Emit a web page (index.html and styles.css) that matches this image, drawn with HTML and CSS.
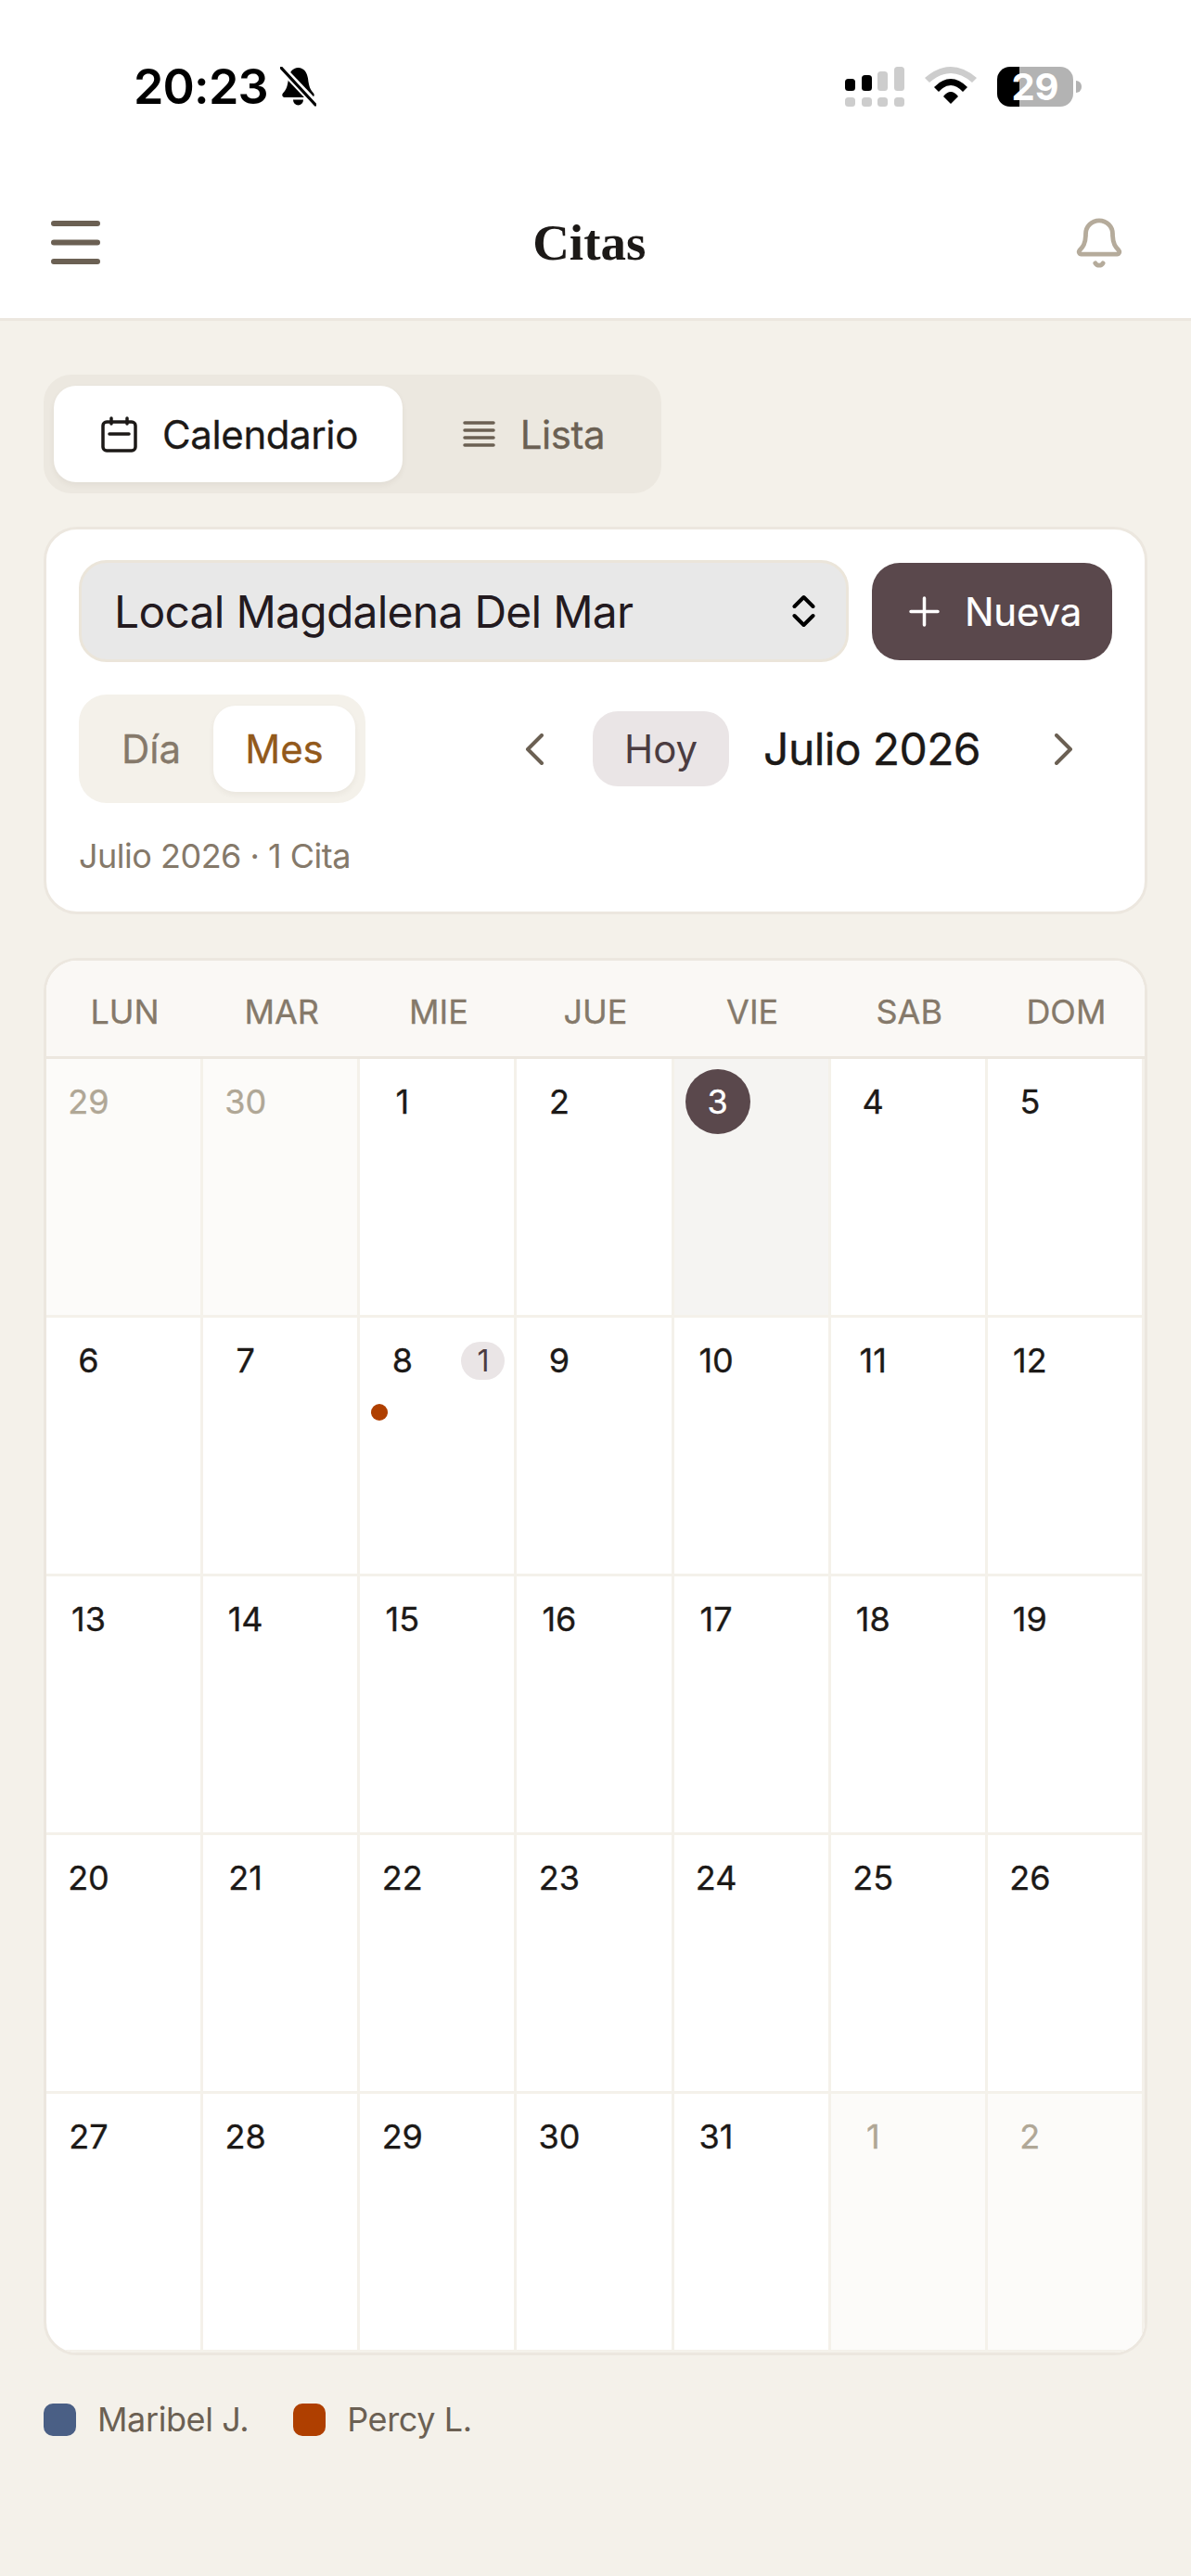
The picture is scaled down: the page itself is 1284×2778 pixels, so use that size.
FILE: index.html
```html
<!DOCTYPE html>
<html lang="es">
<head>
<meta charset="utf-8">
<title>Citas</title>
<link rel="stylesheet" href="styles.css">
</head>
<body>
<header class="top">
  <div class="status">
    <div class="status-left">
      <span class="time">20:23</span>
      <svg class="mute" viewBox="0 0 39 44" width="39" height="44">
        <path d="M19.500 1C25.500 1 29 6 30 12.500C31 22 33 25.500 36 28.500C37.500 30.500 36.500 33 34 33H5C2.500 33 1.500 30.500 3 28.500C6 25.500 8 22 9 12.500C10 6 13.500 1 19.500 1Z" fill="#000"/>
        <path d="M14 35.500H25A5.500 6 0 0 1 14 35.500Z" fill="#000"/>
        <path d="M-1 -1L39 41" stroke="#fff" stroke-width="8"/>
        <path d="M1 1L38 41" stroke="#000" stroke-width="3.200" stroke-linecap="round"/>
      </svg>
    </div>
    <div class="status-right">
      <svg viewBox="0 0 64 43" width="64" height="43">
        <rect x="0" y="13" width="11" height="13" rx="3.500" fill="#000"/>
        <rect x="18" y="9" width="11" height="17" rx="3.500" fill="#000"/>
        <rect x="35" y="5" width="11" height="21" rx="3.500" fill="#cdcdcd"/>
        <rect x="53" y="0" width="11" height="26" rx="3.500" fill="#cdcdcd"/>
        <rect x="0" y="33" width="11" height="10" rx="3.500" fill="#cdcdcd"/>
        <rect x="18" y="33" width="11" height="10" rx="3.500" fill="#cdcdcd"/>
        <rect x="35" y="33" width="11" height="10" rx="3.500" fill="#cdcdcd"/>
        <rect x="53" y="33" width="11" height="10" rx="3.500" fill="#cdcdcd"/>
      </svg>
      <svg viewBox="0 0 56 41" width="56" height="41">
        <path d="M0 12Q28 -12 56 12L51 17Q28 -3 5 17Z" fill="#cdcdcd"/>
        <path d="M10 22Q28 4 46 22L41 27Q28 13 15 27Z" fill="#000"/>
        <path d="M20 32Q28 22 36 32L28 40Z" fill="#000"/>
      </svg>
      <div class="battery-wrap">
        <div class="battery">29</div>
        <span class="battery-cap"></span>
      </div>
    </div>
  </div>
  <div class="nav">
    <button class="menu-btn" aria-label="Menú">
      <svg viewBox="0 0 53 47" width="53" height="47"><path d="M3 3H50M3 23.500H50M3 44H50" stroke="#6b6053" stroke-width="6" stroke-linecap="round"/></svg>
    </button>
    <h1 class="title">Citas</h1>
    <svg class="bell" viewBox="0 0 24 24" width="58" height="58" fill="none" stroke="#b5ab9b" stroke-width="2" stroke-linecap="round" stroke-linejoin="round">
      <path d="M10.268 21a2 2 0 0 0 3.464 0"/>
      <path d="M3.262 15.326A1 1 0 0 0 4 17h16a1 1 0 0 0 .74-1.673C19.41 13.956 18 12.499 18 8A6 6 0 0 0 6 8c0 4.499-1.411 5.956-2.738 7.326"/>
    </svg>
  </div>
</header>

<main class="page">
  <div class="tabs">
    <div class="tab tab-active">
      <svg viewBox="0 0 39 39" width="39" height="39" fill="none" stroke="#1c1917" stroke-width="3.500" stroke-linecap="round" stroke-linejoin="round">
        <rect x="2" y="6" width="35" height="31" rx="4"/>
        <path d="M11 2V8M28 2V8M9 19H30"/>
      </svg>
      <span>Calendario</span>
    </div>
    <div class="tab tab-list">
      <svg viewBox="0 0 35 30" width="35" height="30" fill="none" stroke="#6b6053" stroke-width="3.500" stroke-linecap="round">
        <path d="M2 3H33M2 11H33M2 19H33M2 27H33"/>
      </svg>
      <span>Lista</span>
    </div>
  </div>

  <section class="card filters">
    <div class="row-select">
      <div class="select">
        <span>Local Magdalena Del Mar</span>
        <svg viewBox="0 0 25 36" width="25" height="36" fill="none" stroke="#000" stroke-width="4" stroke-linecap="round" stroke-linejoin="round">
          <path d="M2.500 13L12.500 3L22.500 13M2.500 23L12.500 33L22.500 23"/>
        </svg>
      </div>
      <button class="new-btn">
        <svg viewBox="0 0 33 33" width="33" height="33" fill="none" stroke="#fff" stroke-width="3.500" stroke-linecap="round"><path d="M16.500 2V31M2 16.500H31"/></svg>
        <span>Nueva</span>
      </button>
    </div>
    <div class="row-nav">
      <div class="seg">
        <span class="seg-item">Día</span>
        <span class="seg-item seg-active">Mes</span>
      </div>
      <div class="month-nav">
        <svg class="chev" viewBox="0 0 20 34" width="20" height="34" fill="none" stroke="#6b6053" stroke-width="4" stroke-linecap="round" stroke-linejoin="round"><path d="M18 2L3 17L18 32"/></svg>
        <span class="today-btn">Hoy</span>
        <span class="month">Julio 2026</span>
        <svg class="chev chev-next" viewBox="0 0 20 34" width="20" height="34" fill="none" stroke="#6b6053" stroke-width="4" stroke-linecap="round" stroke-linejoin="round"><path d="M2 2L17 17L2 32"/></svg>
      </div>
    </div>
    <p class="summary">Julio 2026 · 1 Cita</p>
  </section>

  <section class="card calendar">
    <div class="week-head">
      <span>LUN</span><span>MAR</span><span>MIE</span><span>JUE</span><span>VIE</span><span>SAB</span><span>DOM</span>
    </div>
    <div class="grid">
      <div class="cell out"><div class="cell-top"><span class="num">29</span></div></div>
      <div class="cell out"><div class="cell-top"><span class="num">30</span></div></div>
      <div class="cell"><div class="cell-top"><span class="num">1</span></div></div>
      <div class="cell"><div class="cell-top"><span class="num">2</span></div></div>
      <div class="cell today"><div class="cell-top"><span class="num">3</span></div></div>
      <div class="cell"><div class="cell-top"><span class="num">4</span></div></div>
      <div class="cell"><div class="cell-top"><span class="num">5</span></div></div>

      <div class="cell"><div class="cell-top"><span class="num">6</span></div></div>
      <div class="cell"><div class="cell-top"><span class="num">7</span></div></div>
      <div class="cell"><div class="cell-top"><span class="num">8</span><span class="count">1</span></div><span class="dot"></span></div>
      <div class="cell"><div class="cell-top"><span class="num">9</span></div></div>
      <div class="cell"><div class="cell-top"><span class="num">10</span></div></div>
      <div class="cell"><div class="cell-top"><span class="num">11</span></div></div>
      <div class="cell"><div class="cell-top"><span class="num">12</span></div></div>

      <div class="cell"><div class="cell-top"><span class="num">13</span></div></div>
      <div class="cell"><div class="cell-top"><span class="num">14</span></div></div>
      <div class="cell"><div class="cell-top"><span class="num">15</span></div></div>
      <div class="cell"><div class="cell-top"><span class="num">16</span></div></div>
      <div class="cell"><div class="cell-top"><span class="num">17</span></div></div>
      <div class="cell"><div class="cell-top"><span class="num">18</span></div></div>
      <div class="cell"><div class="cell-top"><span class="num">19</span></div></div>

      <div class="cell"><div class="cell-top"><span class="num">20</span></div></div>
      <div class="cell"><div class="cell-top"><span class="num">21</span></div></div>
      <div class="cell"><div class="cell-top"><span class="num">22</span></div></div>
      <div class="cell"><div class="cell-top"><span class="num">23</span></div></div>
      <div class="cell"><div class="cell-top"><span class="num">24</span></div></div>
      <div class="cell"><div class="cell-top"><span class="num">25</span></div></div>
      <div class="cell"><div class="cell-top"><span class="num">26</span></div></div>

      <div class="cell"><div class="cell-top"><span class="num">27</span></div></div>
      <div class="cell"><div class="cell-top"><span class="num">28</span></div></div>
      <div class="cell"><div class="cell-top"><span class="num">29</span></div></div>
      <div class="cell"><div class="cell-top"><span class="num">30</span></div></div>
      <div class="cell"><div class="cell-top"><span class="num">31</span></div></div>
      <div class="cell out"><div class="cell-top"><span class="num">1</span></div></div>
      <div class="cell out"><div class="cell-top"><span class="num">2</span></div></div>
    </div>
  </section>

  <div class="legend">
    <span class="legend-item"><i class="swatch swatch-blue"></i>Maribel J.</span>
    <span class="legend-item"><i class="swatch swatch-rust"></i>Percy L.</span>
  </div>
</main>
</body>
</html>
```
FILE: styles.css
```css
* { box-sizing: border-box; }
html, body { margin: 0; padding: 0; }
body {
  min-height: 2778px;
  background: #f4f1ea;
  font-family: Inter, "Liberation Sans", sans-serif;
  color: #1c1917;
}

/* top */
.top { background: #fff; }
.status {
  height: 180px;
  padding: 72px 118px 0 144px;
  display: flex;
  justify-content: space-between;
  align-items: flex-start;
}
.status-left { display: flex; align-items: flex-start; gap: 13px; }
.time {
  font-size: 52px;
  line-height: 52px;
  font-weight: 600;
  letter-spacing: -.8px;
  color: #000;
  margin-top: -4px;
}
.mute { display: block; }
.status-right { display: flex; align-items: flex-start; gap: 22px; }
.status-right svg { display: block; }
.battery-wrap { display: flex; align-items: center; gap: 3px; }
.battery {
  width: 82px;
  height: 43px;
  border-radius: 14px;
  background: linear-gradient(90deg, #000 24px, #b3b3b3 24px);
  color: #fff;
  font-size: 40px;
  line-height: 43px;
  font-weight: 700;
  text-align: center;
}
.battery-cap {
  width: 6px;
  height: 13px;
  background: #b3b3b3;
  border-radius: 0 6px 6px 0;
}
.nav {
  height: 166px;
  padding: 0 70px 0 48.5px;
  border-bottom: 3px solid #ece7df;
  display: flex;
  justify-content: space-between;
  align-items: center;
}
.menu-btn {
  width: 66px;
  padding: 0;
  border: 0;
  background: none;
  display: flex;
  justify-content: center;
}
.title {
  margin: 0;
  font-family: "Liberation Serif", serif;
  font-size: 55px;
  line-height: 64px;
  font-weight: 700;
  color: #1c1917;
}
.bell { display: block; }

/* page */
.page { padding: 58px 47px 0; }

.tabs {
  width: 666px;
  height: 128px;
  padding: 12px 11px;
  background: #ece8e0;
  border-radius: 30px;
  display: flex;
  margin-bottom: 36px;
}
.tab {
  display: flex;
  align-items: center;
  justify-content: center;
  gap: 27px;
  font-size: 42px;
  letter-spacing: -.4px;
  -webkit-text-stroke: .3px;
  color: #6b6053;
}
.tab-list { flex: 1; padding-left: 15px; }
.tab-active {
  width: 376px;
  padding-left: 3px;
  background: #fff;
  color: #1c1917;
  border-radius: 24px;
  box-shadow: 0 3px 6px rgba(60, 50, 30, .06);
}
.tab svg { display: block; }

.card {
  background: #fff;
  border: 3px solid #ece7df;
  border-radius: 36px;
}
.filters {
  height: 418px;
  padding: 33px 35px 0;
  margin-bottom: 47px;
}
.row-select { display: flex; align-items: center; gap: 25px; }
.select {
  width: 830px;
  height: 110px;
  padding: 0 33px 0 35px;
  background: #e8e8e8;
  border: 3px solid #ebe5da;
  border-radius: 30px;
  display: flex;
  align-items: center;
  justify-content: space-between;
  font-size: 48px;
  letter-spacing: -.75px;
  color: #231a1f;
}
.new-btn {
  width: 259px;
  height: 105px;
  border: 0;
  padding: 0 0 0 7px;
  border-radius: 30px;
  background: #5a484c;
  color: #fff;
  font-family: inherit;
  font-size: 42px;
  letter-spacing: -.2px;
  -webkit-text-stroke: .2px;
  display: flex;
  align-items: center;
  justify-content: center;
  gap: 27px;
}
.row-nav {
  display: flex;
  align-items: center;
  justify-content: space-between;
  margin-top: 35px;
}
.seg {
  width: 309px;
  height: 117px;
  padding: 12px 11px;
  background: #f4f1ea;
  border-radius: 30px;
  display: flex;
  font-size: 42px;
  -webkit-text-stroke: .3px;
  color: #85796a;
}
.seg-item {
  flex: 1;
  display: flex;
  align-items: center;
  justify-content: center;
}
.seg-item:first-child { flex: 0 0 134px; }
.seg-active {
  background: #fff;
  color: #92591b;
  border-radius: 24px;
  box-shadow: 0 3px 6px rgba(60, 50, 30, .06);
}
.month-nav { display: flex; align-items: center; padding-right: 42px; }
.chev { display: block; }
.today-btn {
  width: 147px;
  height: 81px;
  margin: 0 37px 0 53px;
  border-radius: 27px;
  background: #eae5e6;
  color: #4b3c41;
  font-size: 42px;
  display: flex;
  align-items: center;
  justify-content: center;
}
.month {
  font-size: 48px;
  line-height: 60px;
  letter-spacing: -.6px;
  -webkit-text-stroke: .4px;
}
.chev-next { margin-left: 80px; }
.summary {
  margin: 30px 0 0;
  font-size: 36px;
  line-height: 54px;
  letter-spacing: -.5px;
  color: #85796a;
}

/* calendar */
.calendar { overflow: hidden; }
.week-head {
  height: 106px;
  padding-top: 6px;
  background: #faf8f5;
  border-bottom: 3px solid #ece7df;
  display: grid;
  grid-template-columns: repeat(7, 1fr);
  align-items: center;
  text-align: center;
  font-size: 36px;
  -webkit-text-stroke: .3px;
  color: #85796a;
}
.grid {
  display: grid;
  grid-template-columns: repeat(7, 1fr);
  grid-auto-rows: 279px;
}
.cell {
  padding: 11px 12px 0;
  border-right: 3px solid #f4f1ea;
  border-bottom: 3px solid #f4f1ea;
}
.cell.out { background: #fcfbf9; }
.cell.today { background: #f5f4f2; }
.cell-top { display: flex; align-items: center; justify-content: space-between; }
.num {
  width: 70px;
  height: 70px;
  padding: 0 3px 1px 0;
  border-radius: 50%;
  display: flex;
  align-items: center;
  justify-content: center;
  font-size: 36px;
  -webkit-text-stroke: .35px;
  color: #1c1917;
}
.out .num { color: #b0a796; }
.today .num { background: #5a484c; color: #fff; padding: 0 0 1px; }
.count {
  width: 47px;
  height: 41px;
  margin-right: -2px;
  border-radius: 21px;
  background: #eae5e6;
  color: #4b3c41;
  font-size: 32px;
  display: flex;
  align-items: center;
  justify-content: center;
}
.dot {
  display: block;
  width: 18px;
  height: 18px;
  margin-top: 12px;
  border-radius: 50%;
  background: #af3f00;
}

/* legend */
.legend { display: flex; gap: 48px; margin-top: 52px; }
.legend-item {
  display: flex;
  align-items: center;
  gap: 23px;
  font-size: 36px;
  line-height: 35px;
  letter-spacing: -.4px;
  color: #6b6053;
}
.swatch { display: block; width: 35px; height: 35px; border-radius: 10px; }
.swatch-blue { background: #4a5f85; }
.swatch-rust { background: #af3f00; }
```
